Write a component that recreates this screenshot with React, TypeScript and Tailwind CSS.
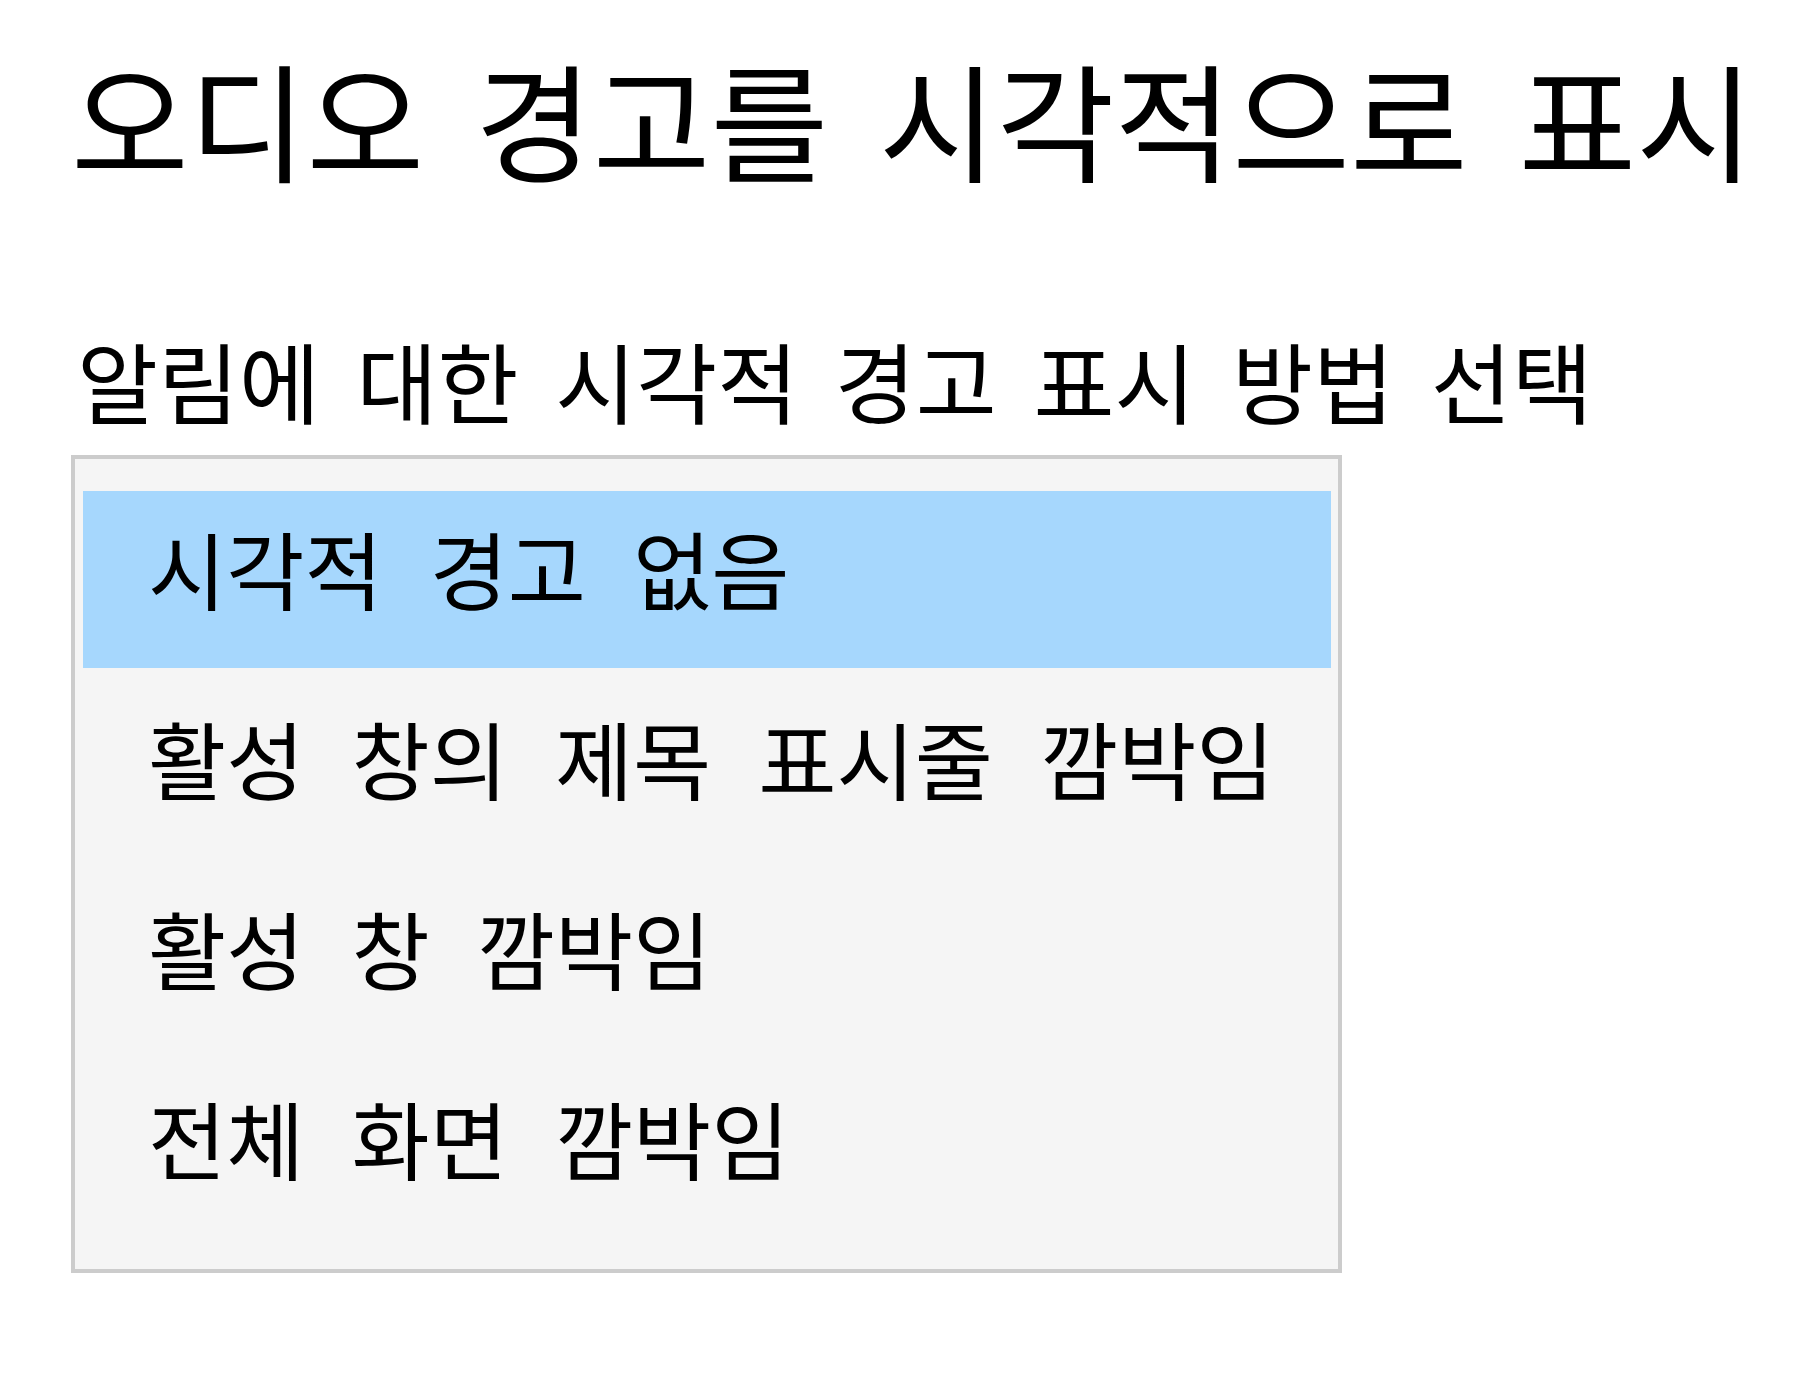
import React from 'react';

const options = [
  '시각적 경고 없음',
  '활성 창의 제목 표시줄 깜박임',
  '활성 창 깜박임',
  '전체 화면 깜박임',
];

const App = () => {
  const selected = 0;

  return (
    <div
      className="min-h-screen bg-white text-black pl-[71px] pt-[54px]"
      style={{ fontFamily: '"Noto Sans CJK KR", "Noto Sans", sans-serif' }}
    >
      <h1 className="text-[128px] leading-none font-normal [word-spacing:22px]">
        오디오 경고를 시각적으로 표시
      </h1>

      <p className="mt-[153px] text-[88px] leading-none [word-spacing:17px] pl-[6px]">
        알림에 대한 시각적 경고 표시 방법 선택
      </p>

      <div className="mt-[32px] w-[1271px] border-4 border-[#cccccc] bg-[#f5f5f5] pt-[32px] pb-[31px] pl-[8px] pr-[7px] flex flex-col gap-[13px]">
        {options.map((label, i) => (
          <div
            key={label}
            className={
              'h-[177px] flex items-center pb-[26px] pl-[65px] text-[85px] leading-none [word-spacing:28px] ' +
              (i === selected ? 'bg-[#a6d7fd]' : '')
            }
          >
            {label}
          </div>
        ))}
      </div>
    </div>
  );
};

export default App;
